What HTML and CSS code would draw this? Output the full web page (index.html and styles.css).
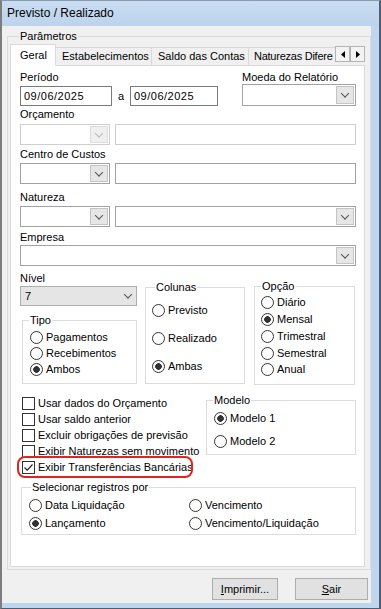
FILE: index.html
```html
<!DOCTYPE html>
<html lang="pt-BR">
<head>
    <meta charset="UTF-8">
    <meta name="viewport" content="width=device-width, initial-scale=1.0">
    <title>Previsto / Realizado</title>
    <link rel="stylesheet" href="styles.css">
</head>
<body>
    <div class="window">
        <div class="titlebar">Previsto / Realizado</div>
        <div class="client">
            <div class="group params">
                <div class="cap">Parâmetros</div>
                <div class="tabs">
                    <div class="tabstrip">
                        <div class="tablist">
                            <div class="tab active">Geral</div>
                            <div class="tab t-estab">Estabelecimentos</div>
                            <div class="tab t-saldo">Saldo das Contas</div>
                            <div class="tab t-nat">Naturezas Difere</div>
                        </div>
                        <div class="tab-arrows">
                            <span class="arrow"><svg width="4" height="7" viewBox="0 0 4 7"><path d="M4 0 L0 3.5 L4 7 Z" fill="#000"/></svg></span>
                            <span class="arrow"><svg width="4" height="7" viewBox="0 0 4 7"><path d="M0 0 L4 3.5 L0 7 Z" fill="#000"/></svg></span>
                        </div>
                    </div>

                    <div class="panel">
                        <div class="row-a">
                            <div class="fld-period">
                                <div class="lbl">Período</div>
                                <div class="edit date1">09/06/2025</div>
                            </div>
                            <span class="sep-a">a</span>
                            <div class="edit date2">09/06/2025</div>
                            <div class="fld-moeda">
                                <div class="lbl">Moeda do Relatório</div>
                                <div class="combo moeda"><span class="dd"></span></div>
                            </div>
                        </div>

                        <div class="blk blk-orc">
                            <div class="lbl">Orçamento</div>
                            <div class="row-combo">
                                <div class="combo off c-small"><span class="dd"></span></div>
                                <div class="combo off c-wide"></div>
                            </div>
                        </div>

                        <div class="blk blk-cc">
                            <div class="lbl">Centro de Custos</div>
                            <div class="row-combo">
                                <div class="combo c-small"><span class="dd"></span></div>
                                <div class="combo c-wide"></div>
                            </div>
                        </div>

                        <div class="blk blk-nat">
                            <div class="lbl">Natureza</div>
                            <div class="row-combo">
                                <div class="combo c-small"><span class="dd"></span></div>
                                <div class="combo c-wide"><span class="dd"></span></div>
                            </div>
                        </div>

                        <div class="blk blk-emp">
                            <div class="lbl">Empresa</div>
                            <div class="combo"><span class="dd"></span></div>
                        </div>

                        <div class="mid">
                            <div class="col-nivel">
                                <div class="lbl">Nível</div>
                                <div class="nivel-combo"><span>7</span><span class="chev"></span></div>
                                <div class="group tipo">
                                    <div class="cap">Tipo</div>
                                    <div class="opts">
                                        <div class="radio"><i></i>Pagamentos</div>
                                        <div class="radio"><i></i>Recebimentos</div>
                                        <div class="radio on"><i></i>Ambos</div>
                                    </div>
                                </div>
                            </div>
                            <div class="group colunas">
                                <div class="cap">Colunas</div>
                                <div class="opts">
                                    <div class="radio"><i></i>Previsto</div>
                                    <div class="radio"><i></i>Realizado</div>
                                    <div class="radio on"><i></i>Ambas</div>
                                </div>
                            </div>
                            <div class="group opcao">
                                <div class="cap">Opção</div>
                                <div class="opts">
                                    <div class="radio"><i></i>Diário</div>
                                    <div class="radio on"><i></i>Mensal</div>
                                    <div class="radio"><i></i>Trimestral</div>
                                    <div class="radio"><i></i>Semestral</div>
                                    <div class="radio"><i></i>Anual</div>
                                </div>
                            </div>
                        </div>

                        <div class="checks-area">
                            <div class="checks">
                                <div class="check"><b></b>Usar dados do Orçamento</div>
                                <div class="check"><b></b>Usar saldo anterior</div>
                                <div class="check"><b></b>Excluir obrigações de previsão</div>
                                <div class="check"><b></b>Exibir Naturezas sem movimento</div>
                                <div class="check mark"><b><svg width="11" height="11" viewBox="0 0 11 11"><path d="M1.5 5.5 L4.2 8.2 L9.5 2.5" fill="none" stroke="#222" stroke-width="1.2"/></svg></b>Exibir Transferências Bancárias</div>
                            </div>
                            <div class="group modelo">
                                <div class="cap">Modelo</div>
                                <div class="opts">
                                    <div class="radio on"><i></i>Modelo 1</div>
                                    <div class="radio"><i></i>Modelo 2</div>
                                </div>
                            </div>
                        </div>

                        <div class="group selecionar">
                            <div class="cap">Selecionar registros por</div>
                            <div class="grid2">
                                <div class="radio"><i></i>Data Liquidação</div>
                                <div class="radio"><i></i>Vencimento</div>
                                <div class="radio on"><i></i>Lançamento</div>
                                <div class="radio"><i></i>Vencimento/Liquidação</div>
                            </div>
                        </div>
                    </div>
                </div>
            </div>

            <div class="buttons">
                <button class="btn btn-print"><u>I</u>mprimir...</button>
                <button class="btn btn-exit"><u>S</u>air</button>
            </div>
        </div>
    </div>
</body>
</html>
```

FILE: styles.css
```css
* {
    box-sizing: border-box;
}

html, body {
    margin: 0;
    padding: 0;
}

body {
    font-family: "Liberation Sans", Arial, sans-serif;
    font-size: 11px;
    line-height: 13px;
    color: #000;
}

.window {
    width: 381px;
    height: 609px;
    display: flex;
    flex-direction: column;
    background: #c0d6ee;
    border-top: 1px solid #8a9bb0;
    border-left: 2px solid #7d7d7d;
    border-right: 2px solid #4e5e70;
    border-bottom: 1px solid #4e5e70;
}

.titlebar {
    height: 25px;
    line-height: 25px;
    padding-left: 5px;
    font-size: 12px;
    background: linear-gradient(#c9ddf2, #bcd3ec);
}

.client {
    flex: 1;
    margin: 0 8px 5px 0;
    background: #f0f0f0;
}

/* group boxes */
.group {
    border: 1px solid #dcdcdc;
}

.cap {
    display: table;
    height: 13px;
    margin-top: -7px;
    padding: 0 1px;
    background: #fff;
    white-space: nowrap;
}

.params {
    width: 364px;
    height: 534px;
    margin: 10px 0 0 5px;
}

.params > .cap {
    margin-left: 11px;
    background: #f0f0f0;
}

/* tabs */
.tabs {
    width: 355px;
    margin: 1px 0 0 2px;
}

.tabstrip {
    display: flex;
    height: 22px;
}

.tablist {
    flex: 1;
    display: flex;
    align-items: flex-end;
    overflow: hidden;
}

.tab {
    flex: none;
    height: 18px;
    margin: 0 0 1px -1px;
    padding: 0 6px;
    line-height: 17px;
    border: 1px solid #d9d9d9;
    border-bottom: 0;
    background: #f0f0f0;
    white-space: nowrap;
}

.tab.active {
    position: relative;
    z-index: 1;
    width: 46px;
    height: 22px;
    margin: 0;
    padding-left: 9px;
    line-height: 20px;
    background: #fff;
}

.t-estab {
    width: 97px;
}

.t-saldo {
    width: 98px;
}

.t-nat {
    flex: 1;
    padding: 0 0 0 5px;
    letter-spacing: -0.25px;
    border-right: 0;
}

.tab-arrows {
    display: flex;
    align-items: flex-start;
    padding-top: 2px;
}

.arrow {
    width: 15px;
    height: 16px;
    display: flex;
    align-items: center;
    justify-content: center;
    border: 1px solid #b4b4b4;
    background: #f3f3f3;
}

.panel {
    height: 502px;
    margin-top: -1px;
    padding: 5px 8px 0 9px;
    background: #fff;
    border: 1px solid #d9d9d9;
}

/* fields */
.lbl {
    height: 13px;
    white-space: nowrap;
}

.row-a {
    display: flex;
    align-items: flex-end;
}

.fld-period .lbl {
    margin-bottom: 2px;
}

.edit {
    height: 20px;
    padding-left: 3px;
    line-height: 18px;
    letter-spacing: 0.5px;
    border: 1px solid #7a7a7a;
    background: #fff;
}

.date1 {
    width: 92px;
}

.date2 {
    width: 88px;
}

.sep-a {
    width: 18px;
    line-height: 20px;
    text-align: center;
}

.fld-moeda {
    width: 114px;
    margin-left: auto;
}

.combo {
    height: 21px;
    display: flex;
    justify-content: flex-end;
    padding: 1px;
    border: 1px solid #a2a2a2;
    background: #fff;
}

.combo.moeda {
    height: 22px;
}

.dd {
    position: relative;
    width: 18px;
    border: 1px solid #c4c4c4;
    background: #e6e6e6;
}

.dd::after,
.chev::after {
    content: '';
    position: absolute;
    left: 50%;
    top: 50%;
    width: 5px;
    height: 5px;
    border-right: 1px solid #505050;
    border-bottom: 1px solid #505050;
    transform: translate(-50%, -75%) rotate(45deg);
}

.combo.off {
    border-color: #cfcfcf;
}

.combo.off .dd {
    border-color: #dcdcdc;
    background: #efefef;
}

.combo.off .dd::after {
    border-color: #b8b8b8;
}

.row-combo {
    display: flex;
    gap: 5px;
}

.c-small {
    width: 90px;
}

.c-wide {
    flex: 1;
}

.blk-orc {
    margin-top: 2px;
}

.blk-orc .lbl {
    margin-bottom: 3px;
}

.blk-cc {
    margin-top: 3px;
}

.blk-cc .lbl,
.blk-nat .lbl {
    margin-bottom: 2px;
}

.blk-nat {
    margin-top: 7px;
}

.blk-emp {
    margin-top: 4px;
}

.blk-emp .lbl {
    margin-bottom: 1px;
}

/* nivel / tipo / colunas / opcao */
.mid {
    display: flex;
    align-items: flex-start;
    margin-top: 6px;
}

.col-nivel {
    width: 117px;
}

.col-nivel .lbl {
    margin-bottom: 1px;
}

.nivel-combo {
    height: 20px;
    display: flex;
    align-items: center;
    justify-content: space-between;
    padding: 0 4px 0 4px;
    border: 1px solid #adadad;
    background: #e5e5e5;
}

.chev {
    position: relative;
    width: 8px;
    height: 8px;
}

.opts {
    display: flex;
    flex-direction: column;
}

.radio {
    height: 16px;
    display: flex;
    align-items: center;
    white-space: nowrap;
}

.radio i {
    flex: none;
    width: 13px;
    height: 13px;
    margin-right: 3px;
    border: 1px solid #333;
    border-radius: 50%;
    background: #fff;
}

.radio.on i {
    background: radial-gradient(circle, #333 0 3px, #fff 3.6px);
}

.tipo {
    width: 115px;
    height: 64px;
    margin: 14px 0 0 2px;
}

.tipo .cap {
    margin-left: 6px;
}

.tipo .opts {
    margin-top: 2px;
    padding-left: 7px;
}

.colunas {
    width: 100px;
    height: 97px;
    margin: 15px 0 0 8px;
}

.colunas .cap {
    margin-left: 9px;
}

.colunas .opts {
    margin-top: 8px;
    padding-left: 6px;
    gap: 12px;
}

.opcao {
    width: 101px;
    height: 99px;
    margin: 14px 0 0 9px;
}

.opcao .cap {
    margin-left: 6px;
}

.opcao .opts {
    margin-top: 1.5px;
    padding-left: 6px;
}

.opcao .radio {
    height: 16.75px;
}

/* checkboxes */
.checks-area {
    display: flex;
    align-items: flex-start;
    margin-top: 10px;
}

.checks {
    width: 186px;
}

.check {
    height: 16px;
    display: flex;
    align-items: center;
    padding-left: 2px;
    white-space: nowrap;
}

.check b {
    flex: none;
    width: 13px;
    height: 13px;
    margin-right: 3px;
    display: flex;
    align-items: center;
    justify-content: center;
    border: 1px solid #333;
    background: #fff;
}

.check.mark {
    width: 170px;
    outline: 2px solid #e3231f;
    outline-offset: 1px;
    border-radius: 5px;
}

.modelo {
    width: 150px;
    height: 55px;
    margin-top: 5px;
}

.modelo .cap {
    margin-left: 6px;
}

.modelo .opts {
    margin-top: 3px;
    padding-left: 7px;
    gap: 7px;
}

.selecionar {
    width: 335px;
    height: 48px;
    margin: 12px 0 0 1px;
}

.selecionar .cap {
    margin-left: 9px;
}

.grid2 {
    display: grid;
    grid-template-columns: 160px 1fr;
    row-gap: 2px;
    margin-top: 3px;
    padding-left: 7px;
}

/* bottom buttons */
.buttons {
    display: flex;
    justify-content: flex-end;
    gap: 17px;
    margin-top: 8px;
    padding-right: 3px;
}

.btn {
    height: 22px;
    padding: 0;
    font: inherit;
    color: #000;
    border: 1px solid #adadad;
    background: #e1e1e1;
}

.btn-print {
    width: 66px;
}

.btn-exit {
    width: 73px;
}
```
